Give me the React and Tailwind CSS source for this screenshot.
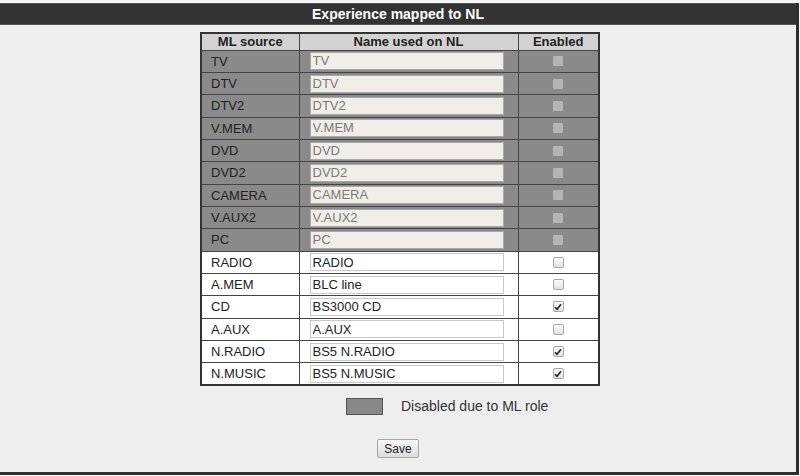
import React from 'react';

const rows = [
    { src: 'TV', name: 'TV', locked: true },
    { src: 'DTV', name: 'DTV', locked: true },
    { src: 'DTV2', name: 'DTV2', locked: true },
    { src: 'V.MEM', name: 'V.MEM', locked: true },
    { src: 'DVD', name: 'DVD', locked: true },
    { src: 'DVD2', name: 'DVD2', locked: true },
    { src: 'CAMERA', name: 'CAMERA', locked: true },
    { src: 'V.AUX2', name: 'V.AUX2', locked: true },
    { src: 'PC', name: 'PC', locked: true },
    { src: 'RADIO', name: 'RADIO', on: false },
    { src: 'A.MEM', name: 'BLC line', on: false },
    { src: 'CD', name: 'BS3000 CD', on: true },
    { src: 'A.AUX', name: 'A.AUX', on: false },
    { src: 'N.RADIO', name: 'BS5 N.RADIO', on: true },
    { src: 'N.MUSIC', name: 'BS5 N.MUSIC', on: true },
];

const Check = ({ locked, on }) => {
    if (locked) {
        return <span className="inline-block w-[10px] h-[10px] bg-[#b4b4b4] rounded-[1px]" />;
    }
    return (
        <span className="inline-flex items-center justify-center w-[11px] h-[11px] rounded-[2px] border border-[#a8a8a8] bg-gradient-to-b from-[#fbfbfb] to-[#e2e2e2]">
            {on && (
                <svg width="8" height="8" viewBox="0 0 8 8">
                    <path d="M1 4.2 L3 6.3 L7 1.3" fill="none" stroke="#222" strokeWidth="1.6" />
                </svg>
            )}
        </span>
    );
};

const App = () => {
    return (
        <div className="w-[800px] h-[476px] bg-[#f7f7f7] pt-[3px] pb-[1px] pr-[1px]" style={{ fontFamily: '"Liberation Sans", Arial, sans-serif' }}>
            <div className="h-full bg-[#eeeeee] border-r-[3px] border-b-[3px] border-[#2e2e2e] flex flex-col">
                <div className="h-[22px] bg-[#333333] border-y border-[#555] flex items-center justify-center text-white font-bold text-[14px]">
                    Experience mapped to NL
                </div>

                <table className="mt-[7px] ml-[200px] w-[398px] table-fixed border-collapse border-2 border-[#333] text-[13px] text-[#222]">
                    <colgroup>
                        <col className="w-[98px]" />
                        <col className="w-[219px]" />
                        <col className="w-[81px]" />
                    </colgroup>
                    <thead>
                        <tr className="h-[17px] bg-[#d2d2d2]">
                            <th className="border border-[#444] font-bold leading-none">ML source</th>
                            <th className="border border-[#444] font-bold leading-none">Name used on NL</th>
                            <th className="border border-[#444] font-bold leading-none">Enabled</th>
                        </tr>
                    </thead>
                    <tbody>
                        {rows.map((r) => (
                            <tr key={r.src} className={`h-[22.35px] ${r.locked ? 'bg-[#8a8a8a]' : 'bg-white'}`}>
                                <td className="border border-[#444] pl-[9px] leading-none p-0">{r.src}</td>
                                <td className="border border-[#444] p-0 pl-[10px]">
                                    <input
                                        type="text"
                                        value={r.name}
                                        disabled={r.locked}
                                        readOnly
                                        className={`block w-[194px] h-[18px] px-[2px] text-[13px] border ${r.locked ? 'bg-[#f1eee9] border-[#a9a9a9] text-[#7a7a7a]' : 'bg-white border-[#c8c8c8] text-[#222]'}`}
                                        style={{ fontFamily: '"Liberation Sans", Arial, sans-serif' }}
                                    />
                                </td>
                                <td className="border border-[#444] p-0 text-center">
                                    <div className="flex items-center justify-center">
                                        <Check locked={r.locked} on={r.on} />
                                    </div>
                                </td>
                            </tr>
                        ))}
                    </tbody>
                </table>

                <div className="mt-[10px] ml-[346px] flex items-center gap-[18px]">
                    <span className="w-[37px] h-[17px] bg-[#888] border border-[#555]" />
                    <span className="text-[14px] text-[#333]">Disabled due to ML role</span>
                </div>

                <div className="mt-[22px] flex justify-center">
                    <button className="h-[19px] px-[6px] text-[12px] leading-none text-[#222] border border-[#a6a6a6] rounded-[2px] bg-gradient-to-b from-[#f8f8f8] to-[#dcdcdc]">
                        Save
                    </button>
                </div>
            </div>
        </div>
    );
};

export default App;
